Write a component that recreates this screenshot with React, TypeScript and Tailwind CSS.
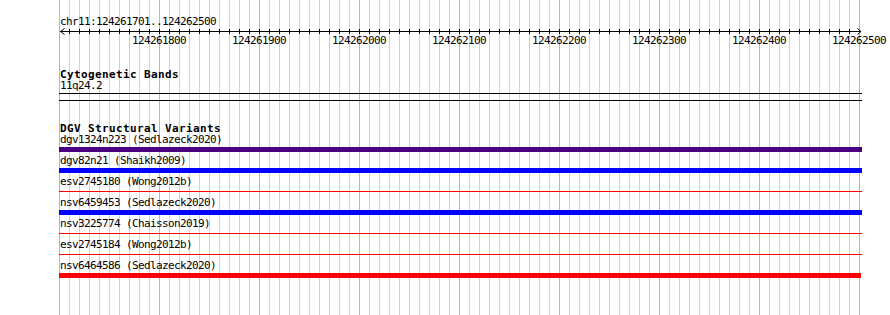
import React from "react";

const MONO = "font-['DejaVu_Sans_Mono',monospace] text-[11px] tracking-[-0.62px] text-black";
const BOLD = "font-['DejaVu_Sans_Mono',monospace] font-bold text-[11px] tracking-[0.38px] text-black";

const minorXs: number[] = [];
for (let x = 69; x < 859; x += 10) if ((x - 59) % 100 !== 0) minorXs.push(x);
const majorXs: number[] = [];
for (let x = 59; x <= 859; x += 100) majorXs.push(x);

function Grid() {
  return (
    <svg className="absolute inset-0" width={890} height={315} aria-hidden>
      {minorXs.map((x) => (
        <line key={x} x1={x + 0.5} x2={x + 0.5} y1={0} y2={315} stroke="#b0e0e6" strokeWidth={1} />
      ))}
      {majorXs.map((x) => (
        <line key={x} x1={x + 0.5} x2={x + 0.5} y1={0} y2={315} stroke="#8cc4e4" strokeWidth={1} />
      ))}
    </svg>
  );
}

function Ruler() {
  const ticks: number[] = [];
  for (let x = 69; x <= 849; x += 10) ticks.push(x);
  return (
    <svg width={890} height={22} className="block">
      <line x1={60} x2={861} y1={3.5} y2={3.5} stroke="#000" strokeWidth={1} />
      {ticks.map((x) => (
        <line key={x} x1={x + 0.5} x2={x + 0.5} y1={1} y2={6} stroke="#000" strokeWidth={1} />
      ))}
      <polyline points="64.5,0.5 60.5,3.5 64.5,6.5" fill="none" stroke="#000" strokeWidth={1} />
      <polyline points="857.5,0.5 861,3.5 857.5,6.5" fill="none" stroke="#000" strokeWidth={1} />
      {majorXs.slice(1).map((x, i) => (
        <text
          key={x}
          x={x - 27}
          y={16}
          fontFamily="DejaVu Sans Mono, monospace"
          fontSize={11}
          letterSpacing={-0.62}
          fill="#000"
        >
          {String(124261800 + i * 100)}
        </text>
      ))}
    </svg>
  );
}

type Row = { label: string; kind: "bar" | "line"; color: string; w?: number };

const rows: Row[] = [
  { label: "dgv1324n223 (Sedlazeck2020)", kind: "bar", color: "bg-[#4b0082]" },
  { label: "dgv82n21 (Shaikh2009)", kind: "bar", color: "bg-[#0000ff]" },
  { label: "esv2745180 (Wong2012b)", kind: "line", color: "bg-[#ff0000]" },
  { label: "nsv6459453 (Sedlazeck2020)", kind: "bar", color: "bg-[#0000ff]" },
  { label: "nsv3225774 (Chaisson2019)", kind: "line", color: "bg-[#ff0000]" },
  { label: "esv2745184 (Wong2012b)", kind: "line", color: "bg-[#ff0000]" },
  { label: "nsv6464586 (Sedlazeck2020)", kind: "bar", color: "bg-[#ff0000]", w: 802 },
];

export default function App() {
  return (
    <div className="relative w-[890px] h-[315px] bg-white overflow-hidden">
      <Grid />
      <div className="relative flex flex-col">
        <div className={`${MONO} pl-[60px] pt-[15px] h-[28px] leading-[13px]`}>chr11:124261701..124262500</div>
        <Ruler />
        <div className="h-[19px]" />
        <div className={`${BOLD} pl-[60px] h-[11px] leading-[11px] whitespace-pre`}>Cytogenetic Bands</div>
        <div className={`${MONO} pl-[60px] h-[11px] leading-[11px]`}>11q24.2</div>
        <div className="ml-[59px] mt-[2px] w-[803px] h-[1px] bg-black" />
        <div className="ml-[59px] mt-[6px] w-[803px] h-[1px] bg-black" />
        <div className="h-[22px]" />
        <div className={`${BOLD} pl-[60px] h-[11px] leading-[11px] whitespace-pre`}>DGV Structural Variants</div>
        {rows.map((r) => (
          <div key={r.label} className="flex flex-col h-[21px]">
            <div className={`${MONO} pl-[60px] h-[11px] leading-[11px] whitespace-pre`}>{r.label}</div>
            {r.kind === "bar" ? (
              <div className={`ml-[59px] mt-[2px] h-[5px] ${r.color} ${r.w === 802 ? "w-[802px]" : "w-[803px]"}`} />
            ) : (
              <div className={`ml-[59px] mt-[4px] h-[1px] w-[803px] ${r.color}`} />
            )}
          </div>
        ))}
      </div>
    </div>
  );
}
